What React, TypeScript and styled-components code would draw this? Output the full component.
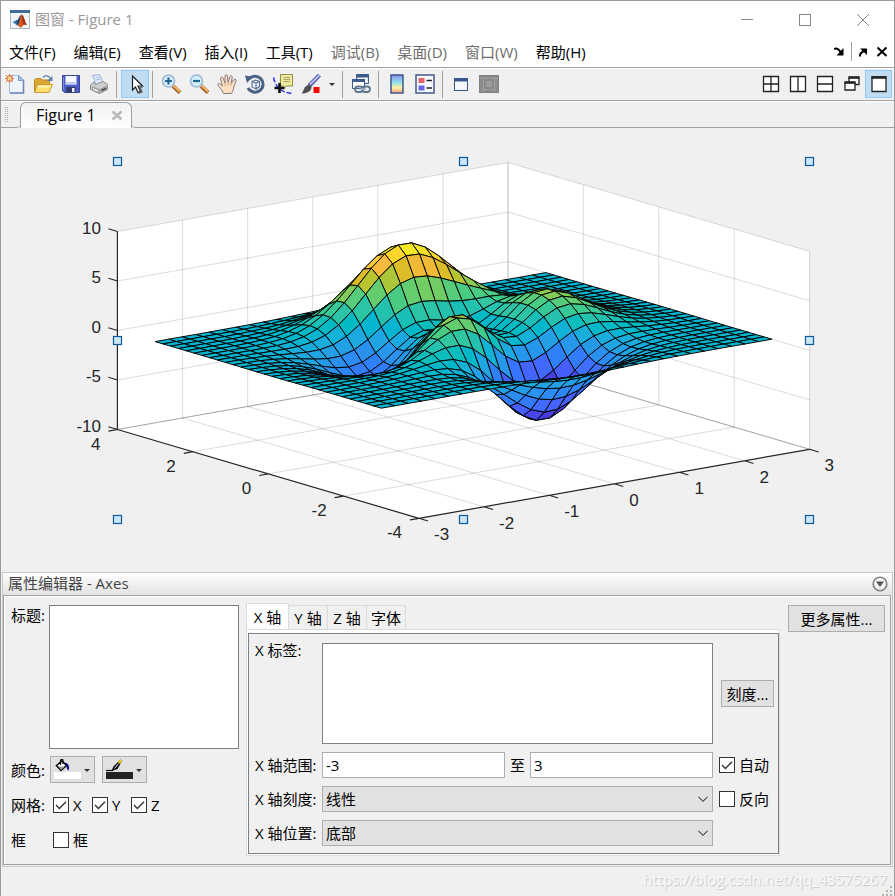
import React from "react";
import styled, { createGlobalStyle } from "styled-components";

const GlobalStyle = createGlobalStyle`
  * { box-sizing: border-box; }
  body { margin: 0; background: #f0f0f0; }
  body, button, input, select, textarea {
    font-family: "Open Sans", "Noto Sans CJK SC", sans-serif;
    font-size: 15px;
    line-height: 20px;
    color: #000;
  }
`;

/* ---------- window frame ---------- */

const Window = styled.div`
  display: flex;
  flex-direction: column;
  min-height: 100vh;
  background: #f0f0f0;
  border: 1px solid #9a9a9a;
  overflow: hidden;
`;

const TitleBar = styled.header`
  display: flex;
  align-items: center;
  height: 37px;
  padding: 0 2px 0 9px;
  background: #fff;
`;

const WindowTitle = styled.h1`
  flex: 1;
  margin: 0 0 2px 5px;
  font-size: 15px;
  font-weight: 400;
  color: #999;
`;

const PlainButton = styled.button`
  display: flex;
  align-items: center;
  justify-content: center;
  padding: 0;
  border: 0;
  background: transparent;
`;

const WindowButton = styled(PlainButton)`
  width: 58px;
  height: 37px;
`;

const MenuBar = styled.nav`
  display: flex;
  align-items: center;
  gap: 18px;
  height: 29px;
  padding: 0 5px 2px 8px;
  background: #fff;
`;

const MenuItem = styled(PlainButton)<{ $muted?: boolean }>`
  white-space: nowrap;
  color: ${(p) => (p.$muted ? "#6d6d6d" : "#000")};
`;

const DockControls = styled.div`
  display: flex;
  align-items: center;
  gap: 5px;
  margin-left: auto;
`;

const DockDivider = styled.span`
  width: 1px;
  height: 19px;
  background: #a0a0a0;
`;

const ToolBar = styled.div`
  display: flex;
  align-items: center;
  height: 34px;
  border-top: 1px solid #a0a0a0;
  border-bottom: 1px solid #a0a0a0;
  box-shadow: inset 0 1px 0 #fff;
`;

const ToolButton = styled(PlainButton)<{ $active?: boolean; $width?: number }>`
  width: ${(p) => p.$width ?? 28}px;
  height: 28px;
  border: 1px solid ${(p) => (p.$active ? "#90c8f6" : "transparent")};
  background: ${(p) => (p.$active ? "#c0dcf3" : "transparent")};
`;

const ToolDivider = styled.span`
  width: 1px;
  height: 27px;
  margin: 0 4px 0 3px;
  background: #a0a0a0;
`;

const LayoutButtons = styled.div`
  display: flex;
  margin-left: auto;
  padding-right: 2px;
`;

const DocumentTabs = styled.div`
  display: flex;
  align-items: stretch;
  height: 27px;
  box-shadow: inset 0 1px 0 #fff;
`;

const TabGrip = styled.div`
  display: flex;
  align-items: center;
  width: 19px;
  padding-left: 3px;
  border-bottom: 1px solid #a0a0a0;
  border-bottom-right-radius: 4px;
`;

const DocumentTab = styled.div`
  display: flex;
  align-items: center;
  justify-content: space-between;
  width: 112px;
  margin-top: 1px;
  padding: 0 8px 2px 15px;
  border: 1px solid #a0a0a0;
  border-bottom: 0;
  border-radius: 6px 6px 0 0;
  background: linear-gradient(#f2f2f2, #fff);
  font-size: 16px;
`;

const TabFiller = styled.div`
  flex: 1;
  border-bottom: 1px solid #a0a0a0;
  border-bottom-left-radius: 4px;
`;

const Figure = styled.main`
  display: flex;
  flex: 1;
  min-height: 320px;
`;

const Chart = styled.svg`
  flex: 1;
  min-width: 0;
  font-family: "Liberation Sans", Arial, sans-serif;
  font-size: 17px;
`;

/* ---------- property editor ---------- */

const Editor = styled.section`
  margin: 0 1px;
  border: 1px solid #c8c8c8;
`;

const EditorHeader = styled.div`
  display: flex;
  align-items: center;
  justify-content: space-between;
  height: 22px;
  padding: 0 4px 0 5px;
  background: linear-gradient(#fff, #e2e2e2);
`;

const EditorTitle = styled.h2`
  margin: 0 0 2px;
  font-size: 15px;
  font-weight: 400;
  color: #444;
`;

const EditorBody = styled.div`
  display: flex;
  align-items: flex-start;
  margin: 0 1px 1px 0;
  padding: 7px 5px 7px 7px;
  border: 1px solid #a0a0a0;
  box-shadow: inset 1px 1px 0 #fff;
`;

const GeneralColumn = styled.div`
  display: flex;
  flex-direction: column;
  width: 228px;
  margin: 2px 7px 0 0;
`;

const FieldRow = styled.div<{ $top?: boolean }>`
  display: flex;
  align-items: ${(p) => (p.$top ? "flex-start" : "center")};
  height: ${(p) => (p.$top ? 147 : 35)}px;
`;

const RowLabel = styled.label`
  width: 38px;
  white-space: nowrap;
`;

const TextBox = styled.textarea`
  flex: 1;
  display: block;
  width: 100%;
  min-width: 0;
  height: 144px;
  margin: 0;
  padding: 4px;
  border: 1px solid #7a8088;
  border-radius: 0;
  background: #fff;
  resize: none;
`;

const AxisTextBox = styled(TextBox)`
  height: 101px;
`;

const ColourButtons = styled.div`
  display: flex;
  gap: 7px;
  margin-left: 1px;
`;

const PushButton = styled.button`
  height: 27px;
  padding: 0;
  border: 1px solid #adadad;
  background: #e1e1e1;
  white-space: nowrap;
`;

const ColourButton = styled(PushButton)`
  display: flex;
  align-items: center;
  justify-content: space-between;
  width: 45px;
  padding: 0 3px;
`;

const MoreButton = styled(PushButton)`
  width: 97px;
  margin: 2px 0 0 8px;
`;

const TicksButton = styled(PushButton)`
  align-self: center;
  width: 53px;
`;

const Checks = styled.div`
  display: flex;
  gap: 8px;
  margin-left: 4px;
`;

const CheckLabel = styled.label`
  display: flex;
  align-items: center;
  gap: 4px;
  min-width: 31px;
  white-space: nowrap;
`;

const tick = `url("data:image/svg+xml,%3Csvg xmlns='http://www.w3.org/2000/svg' viewBox='0 0 14 14'%3E%3Cpath d='M2 7l3.4 3.5L12 3.7' fill='none' stroke='%23333' stroke-width='1.4'/%3E%3C/svg%3E")`;
const chevron = `url("data:image/svg+xml,%3Csvg xmlns='http://www.w3.org/2000/svg' viewBox='0 0 10 10'%3E%3Cpath d='M.5 2.8L5 7.3l4.5-4.5' fill='none' stroke='%23444' stroke-width='1.1'/%3E%3C/svg%3E")`;

const Check = styled.input`
  appearance: none;
  width: 16px;
  height: 16px;
  margin: 0;
  border: 1px solid #333;
  background: #fff;
  &:checked { background: #fff ${tick} center / 14px no-repeat; }
`;

const AxisPanel = styled.div`
  flex: 1;
  min-width: 0;
`;

const AxisTabs = styled.div`
  display: flex;
  align-items: flex-end;
  height: 26px;
`;

const AxisTab = styled.button<{ $active?: boolean }>`
  width: ${(p) => (p.$active ? 43 : 39)}px;
  height: ${(p) => (p.$active ? 26 : 24)}px;
  padding: 0;
  border: 1px solid #dcdcdc;
  border-left-width: ${(p) => (p.$active ? 1 : 0)}px;
  border-bottom-width: 0;
  background: ${(p) => (p.$active ? "#fff" : "#f0f0f0")};
  white-space: nowrap;
`;

const AxisPage = styled.div`
  padding: 3px 0 1px 1px;
  border: 1px solid #dcdcdc;
  background: #fff;
`;

const AxisForm = styled.div`
  display: grid;
  grid-template-columns: 67px minmax(0, 1fr) 61px;
  grid-template-rows: 101px 26px 26px 26px;
  row-gap: 8px;
  align-items: center;
  padding: 9px 4px 7px 6px;
  border: 1px solid #7a8088;
  background: #f0f0f0;
`;

const FormLabel = styled.label<{ $top?: boolean }>`
  align-self: ${(p) => (p.$top ? "start" : "center")};
  margin-top: ${(p) => (p.$top ? -3 : 0)}px;
  white-space: nowrap;
`;

const FormSide = styled.div`
  display: flex;
  padding-left: 6px;
`;

const TicksSide = styled(FormSide)`
  padding-left: 8px;
`;

const Range = styled.div`
  display: flex;
  align-items: center;
  gap: 5px;
`;

const NumberBox = styled.input`
  flex: 1;
  min-width: 0;
  height: 26px;
  padding: 0 3px;
  border: 1px solid #abadb3;
  background: #fff;
`;

const Combo = styled.select`
  appearance: none;
  width: 100%;
  height: 26px;
  padding: 0 20px 0 3px;
  border: 1px solid #adadad;
  border-radius: 0;
  background: #e1e1e1 ${chevron} right 4px center / 10px no-repeat;
`;

const StatusBar = styled.footer`
  display: flex;
  align-items: flex-end;
  justify-content: flex-end;
  height: 31px;
  padding: 0 1px 1px 0;
`;

const Watermark = styled.span`
  align-self: center;
  margin: 0 -6px 6px 0;
  font-size: 15px;
  color: #fafafa;
  text-shadow: 1px 1px 1px #c4c4c4;
`;

/* ---------- surface plot ---------- */

const PARULA = (
  "3e26a8 402ab4 422ec0 4433cb 4537d5 463cde 4741e5 4747eb 484df0 4852f4 4758f8 465efb 4563fd 4269fe 3e6fff 3875fe " +
  "327cfc 2f81fa 2e87f7 2d8cf3 2b91ef 2797eb 259be8 23a0e5 20a5e3 1ca9df 18addb 12b1d6 08b5d0 01b8ca 02bac3 0bbdbd " +
  "19bfb6 24c1ae 2cc4a7 31c69f 37c897 3fca8e 4acb84 57cc7a 64cd6f 72cd64 81cc59 8fcb4e 9dc943 abc739 b9c431 c5c22a " +
  "d1bf27 dcbd29 e6bb2d f0ba36 f8ba3d febe3c fec338 fec934 fccf30 fad62d f7dc2a f5e327 f5e924 f6ef20 f7f51b f9fb15"
).split(" ");

const project = (x: number, y: number, z: number): [number, number] => [
  419 + 65.1 * (x + 3) - 37.7 * (y + 4),
  518.3 - 11.5 * (x + 3) - 11.1 * (y + 4) - 9.9 * (z + 10),
];

const peaks = (x: number, y: number) =>
  3 * (1 - x) ** 2 * Math.exp(-(x ** 2) - (y + 1) ** 2) -
  10 * (x / 5 - x ** 3 - y ** 5) * Math.exp(-(x ** 2) - y ** 2) -
  Math.exp(-((x + 1) ** 2) - y ** 2) / 3;

const COUNT = 30;
const coord = (i: number) => -3 + (6 * i) / (COUNT - 1);
const heights = Array.from({ length: COUNT }, (_, j) =>
  Array.from({ length: COUNT }, (_, i) => peaks(coord(i), coord(j)))
);
const low = Math.min(...heights.flat());
const high = Math.max(...heights.flat());

const faces: { points: string; fill: string }[] = [];
for (let j = COUNT - 2; j >= 0; j--) {
  for (let i = COUNT - 2; i >= 0; i--) {
    const level = Math.floor(((heights[j][i] - low) / (high - low)) * 64);
    const corners = [[i, j], [i + 1, j], [i + 1, j + 1], [i, j + 1]];
    faces.push({
      fill: "#" + PARULA[Math.max(0, Math.min(63, level))],
      points: corners
        .map(([a, b]) => project(coord(a), coord(b), heights[b][a]).map((v) => v.toFixed(1)).join(","))
        .join(" "),
    });
  }
}

type Point3 = [number, number, number];
const segment = (a: Point3, b: Point3) => `M${project(...a).join(" ")}L${project(...b).join(" ")}`;

const gridLines = [
  ...[-2, -1, 0, 1, 2, 3].flatMap((x) => [
    segment([x, -4, -10], [x, 4, -10]),
    segment([x, 4, -10], [x, 4, 10]),
  ]),
  ...[-2, 0, 2, 4].flatMap((y) => [
    segment([-3, y, -10], [3, y, -10]),
    segment([3, y, -10], [3, y, 10]),
  ]),
  segment([3, -4, -10], [3, -4, 10]),
  ...[-10, -5, 0, 5, 10].flatMap((z) => [
    segment([-3, 4, z], [3, 4, z]),
    segment([3, 4, z], [3, -4, z]),
  ]),
];

const axisLines = [
  segment([-3, 4, -10], [-3, 4, 10]),
  segment([-3, 4, -10], [-3, -4, -10]),
  segment([-3, -4, -10], [3, -4, -10]),
];

const tickMarks = [
  ...[-3, -2, -1, 0, 1, 2, 3].map((x) => {
    const [px, py] = project(x, -4, -10);
    return `M${px} ${py}l9 2.7`;
  }),
  ...[-4, -2, 0, 2, 4].map((y) => {
    const [px, py] = project(-3, y, -10);
    return `M${px} ${py}l-9 1.6`;
  }),
  ...[-10, -5, 0, 5, 10].map((z) => {
    const [px, py] = project(-3, 4, z);
    return `M${px} ${py}l-9 -2.7`;
  }),
];

const walls = ([[-3, 4, 10], [3, 4, 10], [3, -4, 10], [3, -4, -10], [-3, -4, -10], [-3, 4, -10]] as Point3[])
  .map((p) => project(...p).join(","))
  .join(" ");

const handles = [
  [117, 161], [463, 161], [809, 161], [117, 340], [809, 340], [117, 519], [463, 519], [809, 519],
];

function SurfacePlot() {
  return (
    <Chart viewBox="1 128 893 444" role="img" aria-label="Surface plot">
      <polygon points={walls} fill="#fff" />
      <path d={gridLines.join("")} stroke="#262626" strokeOpacity=".16" fill="none" />
      <path
        d={segment([-3, 4, -10], [3, 4, -10]) + segment([3, 4, -10], [3, -4, -10])}
        stroke="#262626"
        strokeOpacity=".16"
        fill="none"
      />
      <g stroke="#000" strokeWidth=".95" strokeLinejoin="round">
        {faces.map((f, k) => (
          <polygon key={k} points={f.points} fill={f.fill} />
        ))}
      </g>
      <path d={axisLines.join("") + tickMarks.join("")} stroke="#262626" strokeWidth="1.2" fill="none" />
      <g fill="#262626" textAnchor="end">
        {[10, 5, 0, -5, -10].map((z) => (
          <text key={z} x="101" y={project(-3, 4, z)[1] + 2}>{z}</text>
        ))}
        {[4, 2, 0, -2, -4].map((y) => {
          const [px, py] = project(-3, y, -10);
          return <text key={y} x={px - 17} y={py + 20}>{y}</text>;
        })}
      </g>
      <g fill="#262626">
        {[-3, -2, -1, 0, 1, 2, 3].map((x) => {
          const [px, py] = project(x, -4, -10);
          return <text key={x} x={px + 15} y={py + 22}>{x}</text>;
        })}
      </g>
      {handles.map(([x, y]) => (
        <rect key={`${x}-${y}`} x={x - 3.5} y={y - 3.5} width="8" height="8" fill="#cce6f8" stroke="#0b5a9d" strokeWidth="1.2" />
      ))}
    </Chart>
  );
}

/* ---------- icons ---------- */

const Icon = ({ size = 20, children }: { size?: number; children: React.ReactNode }) => (
  <svg width={size} height={size} viewBox={`0 0 ${size} ${size}`} fill="none" aria-hidden="true">
    {children}
  </svg>
);

const LogoIcon = () => (
  <Icon>
    <rect x=".5" y=".5" width="19" height="18" fill="#f2f5f8" stroke="#a9b6c3" />
    <path d="M0 0h20v3H0z" fill="#3e6c98" />
    <path d="M2.5 12l4.500-2 3 3-2.500 3z" fill="#3f7fb6" />
    <path d="M6.500 10.500c2 0 3-5.500 5-6l-2 8.500-2.500 2z" fill="#1d426b" />
    <path d="M7.500 15.500c1.500-1 3-10.500 4.500-11 1.500.5 3 8 5 10.500-2-.5-2.500-1-4 .5-1 1-1.500 2-2.500 2-1 0-1.500-2-3-2z" fill="#d8571d" />
    <path d="M12 4.500c1.500.5 3 8 5 10.500-2-.5-2.500-1-3.500 0-1-3-1.500-7-1.500-10.500z" fill="#a52b17" />
  </Icon>
);

const NewIcon = () => (
  <Icon>
    <path d="M4.500 1.500h9.500l4.500 4.500v13h-14z" fill="#eef5fd" stroke="#a9bfe0" />
    <path d="M5 19h13.500V6.500" stroke="#6c86b5" strokeWidth="1.600" />
    <path d="M13.500 1.500v5h5z" fill="#a9c4ea" stroke="#7d9ac8" />
    <circle cx="4.500" cy="4.500" r="2.600" fill="#ffd98a" stroke="#dd7a52" strokeWidth="1.300" />
    <path d="M4.500 0v1.500M4.500 7.500V9M0 4.500h1.500M7.500 4.500H9M1 1l1.200 1.200M6.800 6.800L8 8M8 1L6.800 2.200M2.200 6.800L1 8" stroke="#d8623c" />
  </Icon>
);

const OpenIcon = () => (
  <Icon>
    <path d="M1.500 17.500V6L3 4.500h5L9.500 6h7v11.500z" fill="#dda734" stroke="#b98a26" />
    <path d="M1.500 18.500l3-8h15l-3.500 8z" fill="#ffe06e" stroke="#c99a30" />
    <path d="M5 11.500h12.500l-.5 2H4.300z" fill="#fff3b5" />
    <path d="M10 3.500c2-2.500 5.500-2.500 7.500 1" stroke="#6c8db5" strokeWidth="1.500" />
    <path d="M19.500 2v5H14z" fill="#5f82ae" />
  </Icon>
);

const SaveIcon = () => (
  <Icon>
    <path d="M1.500 1.500h17v17h-15l-2-2z" fill="#4a5cc9" stroke="#3a468f" />
    <path d="M4.500 2h11v8.500h-11z" fill="#f5f8ff" />
    <path d="M4.500 8h11v2.500h-11z" fill="#bdcdf0" />
    <path d="M5.500 13h9v5.500h-9z" fill="#333c66" />
    <path d="M11 14h2.500v4H11z" fill="#eef1fb" />
    <path d="M2.500 3v13" stroke="#7d8ce8" />
  </Icon>
);

const PrintIcon = () => (
  <Icon>
    <path d="M3.500 1.500l7-1L14 8l-7 3z" fill="#dcebff" stroke="#9ab2d2" />
    <path d="M6 4l4.500-1M7 6l4.500-1" stroke="#a7bfe0" />
    <path d="M1.500 11l3.500-3 1.500 2.500L14 7.500l4.500 3v5l-8 4-9-4z" fill="#cfcfcf" stroke="#8a8a8a" />
    <path d="M2 11.500l8.500 3.500 8-4v4.500l-8 4z" fill="#a8a8a8" />
    <path d="M3.500 13.500l6 2.500v2.500l-6-2.500z" fill="#f7f7f7" stroke="#888" strokeWidth=".7" />
    <path d="M12.500 16.500l4.500-2.300" stroke="#4e4e4e" strokeWidth="1.600" />
  </Icon>
);

const PointerIcon = () => (
  <Icon size={22}>
    <path d="M8.500 3v14l3-3 2.500 5.500 2.500-1.200-2.500-5.300h4.500z" fill="#fff" stroke="#222" strokeWidth="1.200" />
    <path d="M18.500 14l-2.500.5 2 4.500-3.500 1.500" stroke="#555" strokeWidth="1.200" />
  </Icon>
);

const ZoomIcon = ({ plus }: { plus?: boolean }) => (
  <Icon>
    <path d="M12 12l7 6.500" stroke="#a2642b" strokeWidth="4" />
    <path d="M12.500 11.500l6.500 6" stroke="#f3b666" strokeWidth="2" />
    <circle cx="7.500" cy="7" r="6" fill="#d4efff" stroke="#9fb9d6" strokeWidth="1.700" />
    <path d={plus ? "M7.500 3.500v7M4 7h7" : "M4 7h7"} stroke="#24658f" strokeWidth="2.200" />
  </Icon>
);

const HandIcon = () => (
  <Icon>
    <path
      d="M6.500 19.500C5 16 2.500 13 .8 11c-.5-1.500 1.500-2 2.500-1L5.500 12 3.500 4.500c0-1.700 2-2 2.500-.5L8 9V2c.3-1.700 2.300-1.700 2.500 0l.5 6.500L13 2.500c.8-1.400 2.500-.7 2.300.8L14 9.500 17 5.500c1.200-1 2.500 0 2 1.500l-2 5c-.5 3-1 5-2.500 7.500z"
      fill="#fbe0c0"
      stroke="#8b7a86"
    />
    <path d="M8 9v3M11 9v2.500M14 10l-.5 2" stroke="#d1a080" />
  </Icon>
);

const RotateIcon = () => (
  <Icon>
    <path d="M3.500 5.500A8 8 0 1 1 3 14" stroke="#4b6287" strokeWidth="3" />
    <path d="M0 1.500l7.500 1.200L2 9z" fill="#4b6287" />
    <path d="M7 7.500l3.500-1.500 4 1.500v5L11 15l-4-2zM7 7.500l4 1.500 3.500-1.500M11 9v6" fill="#e5edf7" stroke="#586f94" strokeWidth="1.100" />
  </Icon>
);

const DataCursorIcon = () => (
  <Icon>
    <path d="M.5 3.500C1.500 8 3 11 6 14.500c3 2.500 6 4 13 5" stroke="#2727ef" strokeWidth="1.400" strokeDasharray="5 2" />
    <path d="M7.500.5h12v11.500h-6l-3 2.500V12h-3z" fill="#eeeaa0" stroke="#8f8d45" />
    <path d="M10.500 3.500h6.500M10.500 5.500h6.500M10.500 7.500h6.500" stroke="#aaa55b" />
    <path d="M6.500 9v10M1.500 14h10" stroke="#111" strokeWidth="2.600" />
  </Icon>
);

const BrushIcon = () => (
  <Icon>
    <path d="M8 12L18.500 1" stroke="#4c4fa5" strokeWidth="4" />
    <path d="M9 10.500L18.500 1" stroke="#bcc7fa" strokeWidth="1.800" />
    <path d="M10.500 13c0 4-4 6.500-10 6.500 2.500-2 2-6.500 5.500-8 2-.7 3.500 0 4.500 1.500z" fill="#4d504e" />
    <path d="M12.500 13h6v6h-6z" fill="#f40606" />
  </Icon>
);

const CaretIcon = () => (
  <Icon size={8}>
    <path d="M1 3h6L4 6z" fill="#333" />
  </Icon>
);

const LinkIcon = () => (
  <Icon>
    <path d="M5.500.5h12v9h-12z" fill="#eaf0fa" stroke="#3d5a8f" />
    <path d="M5 .5h13v3H5z" fill="#3d5a8f" />
    <path d="M1.500 5.500h12v9h-12z" fill="#fff" stroke="#3d5a8f" />
    <path d="M1 5h13v3H1z" fill="#3d5a8f" />
    <rect x="4" y="12.500" width="8" height="5.500" rx="2.700" stroke="#60758e" strokeWidth="1.800" />
    <rect x="11" y="12.500" width="8" height="5.500" rx="2.700" stroke="#60758e" strokeWidth="1.800" />
    <path d="M8 15.200h7" stroke="#a5b9c9" strokeWidth="1.800" />
  </Icon>
);

const ColorbarIcon = () => (
  <Icon>
    <defs>
      <linearGradient id="colorbar" x1="0" y1="0" x2="0" y2="1">
        <stop offset="0" stopColor="#8b91e8" />
        <stop offset=".4" stopColor="#8edff3" />
        <stop offset=".7" stopColor="#fff1a0" />
        <stop offset="1" stopColor="#f3a084" />
      </linearGradient>
    </defs>
    <rect x="4" y="1" width="12" height="18" fill="url(#colorbar)" stroke="#354f86" strokeWidth="1.400" />
  </Icon>
);

const LegendIcon = () => (
  <Icon>
    <rect x="1" y="1" width="18" height="18" fill="#f6f8ff" stroke="#43598d" strokeWidth="1.500" />
    <path d="M3.500 4h6v5h-6z" fill="#e36464" />
    <path d="M3.500 11.500h6v5h-6z" fill="#6666e3" />
    <path d="M11.500 6.500H17M11.500 14H17" stroke="#222" strokeWidth="1.500" />
  </Icon>
);

const HideToolsIcon = () => (
  <Icon>
    <rect x="3.500" y="4.500" width="13" height="12" fill="#f5f9ff" stroke="#3a568d" />
    <path d="M3 4h14v3.500H3z" fill="#3a568d" />
  </Icon>
);

const ShowToolsIcon = () => (
  <Icon>
    <rect x=".5" y="1.500" width="19" height="17" fill="#8c8c8c" stroke="#808080" />
    <path d="M1 4.500h18M4.500 5v13M15.500 5v13M5 15.500h10" stroke="#a2a2a2" />
    <rect x="6" y="6" width="8" height="8" fill="#9b9b9b" stroke="#7c7c7c" />
  </Icon>
);

const layoutShapes: Record<string, React.ReactNode> = {
  平铺: <path d="M1.500 1.500h15v15h-15zM9 1.500v15M1.500 9h15" fill="#fff" />,
  左右: <path d="M1.500 1.500h15v15h-15zM9 1.500v15" fill="#fff" />,
  上下: <path d="M1.500 1.500h15v15h-15zM1.500 9h15" fill="#fff" />,
  浮动: (
    <>
      <path d="M6 2.500h10v7H6z" fill="#fff" />
      <path d="M5.500 2.500h11" strokeWidth="2.500" />
      <path d="M2 7.500h10v7.500H2z" fill="#fff" />
      <path d="M1.500 7.500h11" strokeWidth="2.500" />
    </>
  ),
  最大化: (
    <>
      <path d="M2 2h14v14.500H2z" fill="#fff" />
      <path d="M1.500 2.500h15" strokeWidth="2.500" />
    </>
  ),
};

const BucketIcon = () => (
  <svg width="27" height="21" viewBox="0 0 27 21" aria-hidden="true">
    <path d="M0 13h27v7H0z" fill="#fff" />
    <path d="M2.500 6.500L8 2l4.500 4.500-5.500 5z" fill="#fff" stroke="#000" strokeWidth="1.500" />
    <path d="M4 7.500h7l-4 3.500z" fill="#999" />
    <path d="M6.500 6V1.500C7 0 9 0 9 1.500V5" fill="none" stroke="#000" strokeWidth="1.200" />
    <path d="M10.500 3.500c4 .5 5.500 4 4 8-2-1-2-4-2-5z" fill="#0b0b86" />
  </svg>
);

const PenIcon = () => (
  <svg width="27" height="21" viewBox="0 0 27 21" aria-hidden="true">
    <path d="M0 13h27v7H0z" fill="#222" />
    <path d="M0 11.500h7" stroke="#000" strokeWidth="1.200" />
    <path d="M5.500 12l2-4.500L12 3l2.500 1.500-3 5.500z" fill="#000" />
    <path d="M8.500 9.500l4-5" stroke="#fff" />
    <path d="M12 3L14.500.5 16 2l-2 3z" fill="#f0dc20" stroke="#7a7200" strokeWidth=".5" />
  </svg>
);

/* ---------- page ---------- */

const menus: [string, boolean?][] = [
  ["文件(F)"], ["编辑(E)"], ["查看(V)"], ["插入(I)"], ["工具(T)"],
  ["调试(B)", true], ["桌面(D)", true], ["窗口(W)", true], ["帮助(H)"],
];

export default function App() {
  return (
    <>
      <GlobalStyle />
      <Window>
        <TitleBar>
          <LogoIcon />
          <WindowTitle>图窗 - Figure 1</WindowTitle>
          <WindowButton aria-label="最小化">
            <Icon size={12}><path d="M0 5.500h12" stroke="#888" /></Icon>
          </WindowButton>
          <WindowButton aria-label="最大化">
            <Icon size={12}><rect x=".5" y=".5" width="11" height="11" stroke="#888" /></Icon>
          </WindowButton>
          <WindowButton aria-label="关闭">
            <Icon size={12}><path d="M0 0l12 12M12 0L0 12" stroke="#888" /></Icon>
          </WindowButton>
        </TitleBar>

        <MenuBar>
          {menus.map(([name, muted]) => (
            <MenuItem key={name} $muted={muted}>{name}</MenuItem>
          ))}
          <DockControls>
            <PlainButton aria-label="停靠">
              <Icon size={12}>
                <path d="M0 3c3-1.500 5 .5 6.500 3" stroke="#000" strokeWidth="2" />
                <path d="M9.500 2v7.500H2.500z" fill="#000" />
              </Icon>
            </PlainButton>
            <DockDivider />
            <PlainButton aria-label="取消停靠">
              <Icon size={12}>
                <path d="M3 10.500c-.5-3 1-4 3.500-5" stroke="#000" strokeWidth="2" />
                <path d="M3 2.500h7V9z" fill="#000" />
              </Icon>
            </PlainButton>
            <PlainButton aria-label="关闭图窗">
              <Icon size={15}><path d="M3.500 3.500l9 8.500M12.500 3.500l-9 8.500" stroke="#000" strokeWidth="2" /></Icon>
            </PlainButton>
          </DockControls>
        </MenuBar>

        <ToolBar>
          <ToolButton aria-label="新建图窗"><NewIcon /></ToolButton>
          <ToolButton aria-label="打开文件"><OpenIcon /></ToolButton>
          <ToolButton aria-label="保存图窗"><SaveIcon /></ToolButton>
          <ToolButton aria-label="打印图窗"><PrintIcon /></ToolButton>
          <ToolDivider />
          <ToolButton aria-label="编辑绘图" $active><PointerIcon /></ToolButton>
          <ToolDivider />
          <ToolButton aria-label="放大"><ZoomIcon plus /></ToolButton>
          <ToolButton aria-label="缩小"><ZoomIcon /></ToolButton>
          <ToolButton aria-label="平移"><HandIcon /></ToolButton>
          <ToolButton aria-label="三维旋转"><RotateIcon /></ToolButton>
          <ToolButton aria-label="数据游标"><DataCursorIcon /></ToolButton>
          <ToolButton aria-label="刷亮"><BrushIcon /></ToolButton>
          <ToolButton aria-label="刷亮选项" $width={14}><CaretIcon /></ToolButton>
          <ToolDivider />
          <ToolButton aria-label="链接绘图"><LinkIcon /></ToolButton>
          <ToolDivider />
          <ToolButton aria-label="插入颜色栏"><ColorbarIcon /></ToolButton>
          <ToolButton aria-label="插入图例"><LegendIcon /></ToolButton>
          <ToolDivider />
          <ToolButton aria-label="隐藏绘图工具"><HideToolsIcon /></ToolButton>
          <ToolButton aria-label="显示绘图工具"><ShowToolsIcon /></ToolButton>
          <LayoutButtons>
            {Object.entries(layoutShapes).map(([name, shape]) => (
              <ToolButton key={name} aria-label={name} $width={27} $active={name === "最大化"}>
                <Icon size={18}><g stroke="#222" strokeWidth="1.300">{shape}</g></Icon>
              </ToolButton>
            ))}
          </LayoutButtons>
        </ToolBar>

        <DocumentTabs>
          <TabGrip>
            <Icon size={16}><path d="M1.500 1v15M3.500 1v15" stroke="#a8a8a8" strokeDasharray="1 1" /></Icon>
          </TabGrip>
          <DocumentTab>
            Figure 1
            <PlainButton aria-label="关闭标签">
              <Icon size={12}><path d="M1.500 2.500l9 8M10.500 2.500l-9 8" stroke="#b8b8b8" strokeWidth="2.600" /></Icon>
            </PlainButton>
          </DocumentTab>
          <TabFiller />
        </DocumentTabs>

        <Figure><SurfacePlot /></Figure>

        <Editor>
          <EditorHeader>
            <EditorTitle>属性编辑器 - Axes</EditorTitle>
            <PlainButton aria-label="折叠">
              <Icon size={16}>
                <circle cx="8" cy="8" r="6.800" fill="#f4f4f4" stroke="#808080" strokeWidth="1.600" />
                <path d="M4 5.500h8L8 11z" fill="#555" />
              </Icon>
            </PlainButton>
          </EditorHeader>
          <EditorBody>
            <GeneralColumn>
              <FieldRow $top>
                <RowLabel htmlFor="title">标题:</RowLabel>
                <TextBox id="title" />
              </FieldRow>
              <FieldRow>
                <RowLabel as="span">颜色:</RowLabel>
                <ColourButtons>
                  <ColourButton aria-label="背景颜色"><BucketIcon /><CaretIcon /></ColourButton>
                  <ColourButton aria-label="线条颜色"><PenIcon /><CaretIcon /></ColourButton>
                </ColourButtons>
              </FieldRow>
              <FieldRow>
                <RowLabel as="span">网格:</RowLabel>
                <Checks>
                  {["X", "Y", "Z"].map((name) => (
                    <CheckLabel key={name}><Check type="checkbox" defaultChecked />{name}</CheckLabel>
                  ))}
                </Checks>
              </FieldRow>
              <FieldRow>
                <RowLabel as="span">框</RowLabel>
                <Checks>
                  <CheckLabel><Check type="checkbox" />框</CheckLabel>
                </Checks>
              </FieldRow>
            </GeneralColumn>

            <AxisPanel>
              <AxisTabs role="tablist">
                {["X 轴", "Y 轴", "Z 轴", "字体"].map((name, i) => (
                  <AxisTab key={name} role="tab" aria-selected={i === 0} $active={i === 0}>{name}</AxisTab>
                ))}
              </AxisTabs>
              <AxisPage>
                <AxisForm>
                  <FormLabel htmlFor="xlabel" $top>X 标签:</FormLabel>
                  <AxisTextBox id="xlabel" />
                  <TicksSide><TicksButton>刻度...</TicksButton></TicksSide>

                  <FormLabel htmlFor="xmin">X 轴范围:</FormLabel>
                  <Range>
                    <NumberBox id="xmin" defaultValue="-3" />
                    <label htmlFor="xmax">至</label>
                    <NumberBox id="xmax" defaultValue="3" />
                  </Range>
                  <FormSide><CheckLabel><Check type="checkbox" defaultChecked />自动</CheckLabel></FormSide>

                  <FormLabel htmlFor="xscale">X 轴刻度:</FormLabel>
                  <Combo id="xscale"><option>线性</option><option>对数</option></Combo>
                  <FormSide><CheckLabel><Check type="checkbox" />反向</CheckLabel></FormSide>

                  <FormLabel htmlFor="xlocation">X 轴位置:</FormLabel>
                  <Combo id="xlocation"><option>底部</option><option>顶部</option></Combo>
                </AxisForm>
              </AxisPage>
            </AxisPanel>

            <MoreButton>更多属性...</MoreButton>
          </EditorBody>
        </Editor>

        <StatusBar>
          <Watermark>https://blog.csdn.net/qq_43575267</Watermark>
          <Icon size={12}>
            <path d="M9 1h2v2H9zM9 5h2v2H9zM5 5h2v2H5zM9 9h2v2H9zM5 9h2v2H5zM1 9h2v2H1z" fill="#b4b4a4" />
          </Icon>
        </StatusBar>
      </Window>
    </>
  );
}
